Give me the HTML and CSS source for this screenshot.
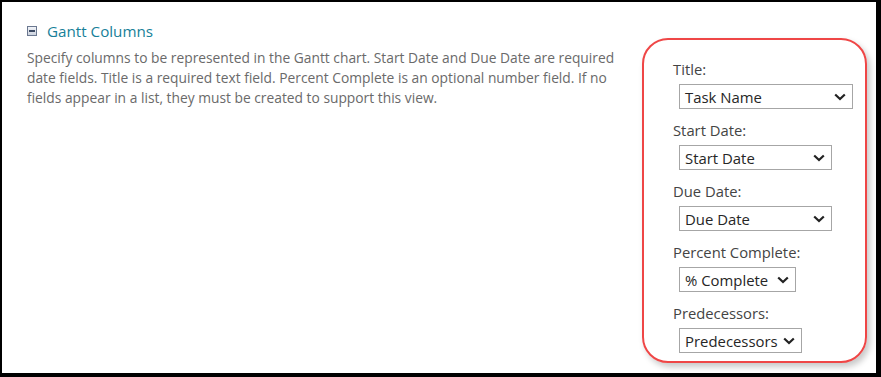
FILE: index.html
```html
<!DOCTYPE html>
<html lang="en">
<head>
<meta charset="utf-8">
<title>Gantt Columns</title>
<link rel="stylesheet" href="styles.css">
</head>
<body>
<div class="frame">
  <section class="intro">
    <h2 class="heading">
      <svg class="collapse" width="10" height="10" viewBox="0 0 10 10" aria-hidden="true">
        <defs>
          <linearGradient id="g" x1="0" y1="0" x2="0" y2="1">
            <stop offset="0" stop-color="#f4f6fa"/>
            <stop offset="1" stop-color="#c9d0dc"/>
          </linearGradient>
        </defs>
        <rect x="0.5" y="0.5" width="9" height="9" fill="url(#g)" stroke="#6b7890"/>
        <rect x="2" y="4" width="6" height="2" fill="#3c4a63"/>
      </svg>
      <span>Gantt Columns</span>
    </h2>
    <p class="desc">Specify columns to be represented in the Gantt chart. Start Date and Due Date are required date fields. Title is a required text field. Percent Complete is an optional number field. If no fields appear in a list, they must be created to support this view.</p>
  </section>
  <aside class="panel">
    <div class="field">
      <div class="label">Title:</div>
      <div class="select w-title"><span>Task Name</span><svg class="chev" width="12" height="8" viewBox="0 0 12 8"><path d="M1.2 1.5l4.8 4.6 4.8-4.6" fill="none" stroke="#222" stroke-width="2.2"/></svg></div>
    </div>
    <div class="field">
      <div class="label">Start Date:</div>
      <div class="select w-date"><span>Start Date</span><svg class="chev" width="12" height="8" viewBox="0 0 12 8"><path d="M1.2 1.5l4.8 4.6 4.8-4.6" fill="none" stroke="#222" stroke-width="2.2"/></svg></div>
    </div>
    <div class="field">
      <div class="label">Due Date:</div>
      <div class="select w-date"><span>Due Date</span><svg class="chev" width="12" height="8" viewBox="0 0 12 8"><path d="M1.2 1.5l4.8 4.6 4.8-4.6" fill="none" stroke="#222" stroke-width="2.2"/></svg></div>
    </div>
    <div class="field">
      <div class="label">Percent Complete:</div>
      <div class="select w-pct"><span>% Complete</span><svg class="chev" width="12" height="8" viewBox="0 0 12 8"><path d="M1.2 1.5l4.8 4.6 4.8-4.6" fill="none" stroke="#222" stroke-width="2.2"/></svg></div>
    </div>
    <div class="field">
      <div class="label">Predecessors:</div>
      <div class="select w-pred"><span>Predecessors</span><svg class="chev" width="12" height="8" viewBox="0 0 12 8"><path d="M1.2 1.5l4.8 4.6 4.8-4.6" fill="none" stroke="#222" stroke-width="2.2"/></svg></div>
    </div>
  </aside>
</div>
</body>
</html>
```
FILE: styles.css
```css
html, body {
  margin: 0;
  padding: 0;
  background: #000;
}
body {
  width: 881px;
  height: 377px;
  overflow: hidden;
  font-family: "Open Sans", "Noto Sans", sans-serif;
}
.frame {
  box-sizing: border-box;
  width: 881px;
  height: 377px;
  border-style: solid;
  border-color: #000;
  border-width: 2px 5px 4px 2px;
  background: #fff;
  display: flex;
  align-items: flex-start;
  padding: 19px 9px 0 25px;
}
.intro {
  width: 600px;
}
.heading {
  margin: 0;
  display: flex;
  align-items: center;
  gap: 10px;
  font-weight: normal;
  font-size: 15.2px;
  line-height: 20px;
  color: #177f99;
}
.collapse {
  flex: none;
}
.desc {
  margin: 7px 0 0;
  font-size: 13.8px;
  line-height: 20px;
  color: #6a6a6a;
}
.panel {
  box-sizing: border-box;
  margin-left: auto;
  margin-top: 17px;
  width: 225px;
  height: 325px;
  border: 2px solid #ef4646;
  border-radius: 26px;
  box-shadow: 3px 4px 6px rgba(0, 0, 0, 0.22);
  padding: 19px 0 0 29px;
}
.field {
  display: flex;
  flex-direction: column;
  align-items: flex-start;
}
.label {
  font-size: 14.8px;
  line-height: 20px;
  color: #444;
}
.select {
  box-sizing: border-box;
  margin: 5px 0 11px 6px;
  height: 25px;
  border: 1px solid #a6a6a6;
  display: flex;
  align-items: center;
  justify-content: space-between;
  padding: 0 6px 0 5px;
  font-size: 14.9px;
  color: #262626;
  background: #fff;
}
.chev {
  flex: none;
}
.w-title { width: 174px; }
.w-date { width: 153px; }
.w-pct { width: 117px; }
.w-pred { width: 123px; }
```
